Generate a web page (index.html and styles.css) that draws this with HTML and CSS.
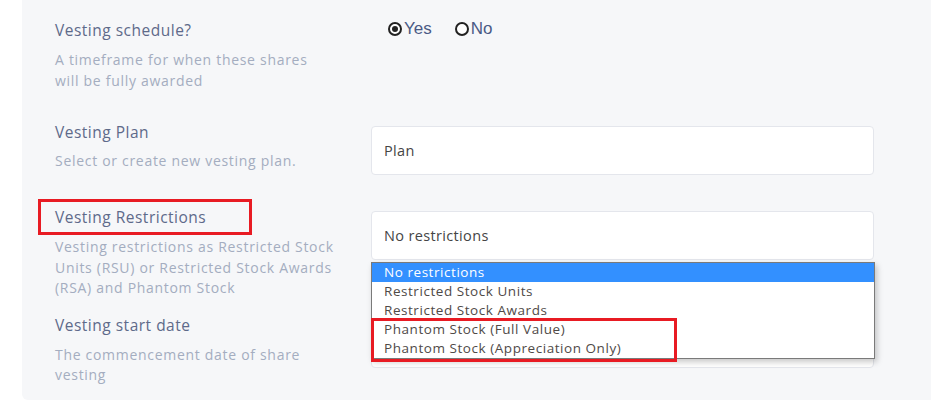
FILE: index.html
```html
<!DOCTYPE html>
<html>
<head>
<meta charset="utf-8">
<link rel="stylesheet" href="styles.css">
</head>
<body>
<div class="panel">
  <div class="row row-schedule">
    <div class="info">
      <div class="label">Vesting schedule?</div>
      <div class="desc">A timeframe for when these shares<br>will be fully awarded</div>
    </div>
    <div class="field radios">
      <label class="radio"><span class="dot checked"></span>Yes</label>
      <label class="radio"><span class="dot"></span>No</label>
    </div>
  </div>

  <div class="row row-plan">
    <div class="info">
      <div class="label">Vesting Plan</div>
      <div class="desc">Select or create new vesting plan.</div>
    </div>
    <div class="field">
      <div class="input">Plan</div>
    </div>
  </div>

  <div class="row row-restrictions">
    <div class="info">
      <div class="label marked">Vesting Restrictions</div>
      <div class="desc">Vesting restrictions as Restricted Stock<br>Units (RSU) or Restricted Stock Awards<br>(RSA) and Phantom Stock</div>
    </div>
    <div class="field select-wrap">
      <div class="input">No restrictions</div>
      <ul class="listbox">
        <li class="selected">No restrictions</li>
        <li>Restricted Stock Units</li>
        <li>Restricted Stock Awards</li>
        <li>Phantom Stock (Full Value)</li>
        <li>Phantom Stock (Appreciation Only)</li>
      </ul>
    </div>
  </div>

  <div class="row row-start">
    <div class="info">
      <div class="label">Vesting start date</div>
      <div class="desc">The commencement date of share<br>vesting</div>
    </div>
    <div class="field">
      <div class="input"></div>
    </div>
  </div>
</div>
</body>
</html>
```

FILE: styles.css
```css
html, body {
  margin: 0;
  padding: 0;
  background: #ffffff;
}

body {
  font-family: "Open Sans", "Noto Sans", sans-serif;
  width: 931px;
  height: 417px;
  overflow: hidden;
}

.panel {
  margin-left: 22px;
  background: #f6f7f9;
  border-bottom-left-radius: 6px;
  height: 400px;
  padding: 20px 0 0 33px;
  box-sizing: border-box;
}

.row {
  display: grid;
  grid-template-columns: 316px 503px;
  align-items: start;
}

.row-plan { margin-top: 31px; }
.row-restrictions { margin-top: 32px; }
.row-start { margin-top: 16px; }

.label {
  font-size: 15.5px;
  letter-spacing: 0.5px;
  line-height: 20px;
  color: #5e6a8a;
}

.label.marked {
  position: relative;
}

.label.marked::before {
  content: "";
  position: absolute;
  left: -17px;
  top: -8px;
  width: 214px;
  height: 36px;
  box-sizing: border-box;
  border: 3px solid #e81b23;
}

.desc {
  margin-top: 10px;
  font-size: 14px;
  letter-spacing: 0.7px;
  line-height: 20.5px;
  color: #a4adc0;
}

.row-plan .desc { margin-top: 9px; }

.field {
  padding-top: 4px;
}

.radios {
  display: flex;
  align-items: center;
  gap: 23px;
  padding-top: 1px;
  padding-left: 17px;
}

.radio {
  display: flex;
  align-items: center;
  gap: 2px;
  font-family: "Liberation Sans", Arial, sans-serif;
  font-size: 17px;
  line-height: 16px;
  color: #4a5a85;
}

.dot {
  width: 14px;
  height: 14px;
  box-sizing: border-box;
  border: 2px solid #222;
  border-radius: 50%;
  display: inline-flex;
  align-items: center;
  justify-content: center;
  background: #fff;
}

.dot.checked::after {
  content: "";
  width: 6px;
  height: 6px;
  border-radius: 50%;
  background: #222;
}

.input {
  height: 49px;
  box-sizing: border-box;
  background: #fff;
  border: 1px solid #e4e6ec;
  border-radius: 4px;
  padding-left: 12px;
  font-size: 14.5px;
  letter-spacing: 0.35px;
  line-height: 47px;
  color: #454545;
}

.select-wrap {
  position: relative;
}

.listbox {
  position: absolute;
  left: 0;
  top: 55px;
  width: 504px;
  margin: 0;
  padding: 0;
  list-style: none;
  background: #fff;
  border: 1px solid #7a7a7a;
  box-sizing: border-box;
  box-shadow: 2px 3px 6px rgba(0, 0, 0, 0.22);
  z-index: 2;
}

.listbox::after {
  content: "";
  position: absolute;
  left: -1px;
  top: 55px;
  width: 306px;
  height: 44px;
  box-sizing: border-box;
  border: 3px solid #e81b23;
}

.listbox li {
  height: 19px;
  line-height: 19px;
  padding-left: 12px;
  font-size: 13.5px;
  letter-spacing: 0.55px;
  color: #4f4a47;
}

.listbox li.selected {
  background: #3390ff;
  color: #fff;
}
```
